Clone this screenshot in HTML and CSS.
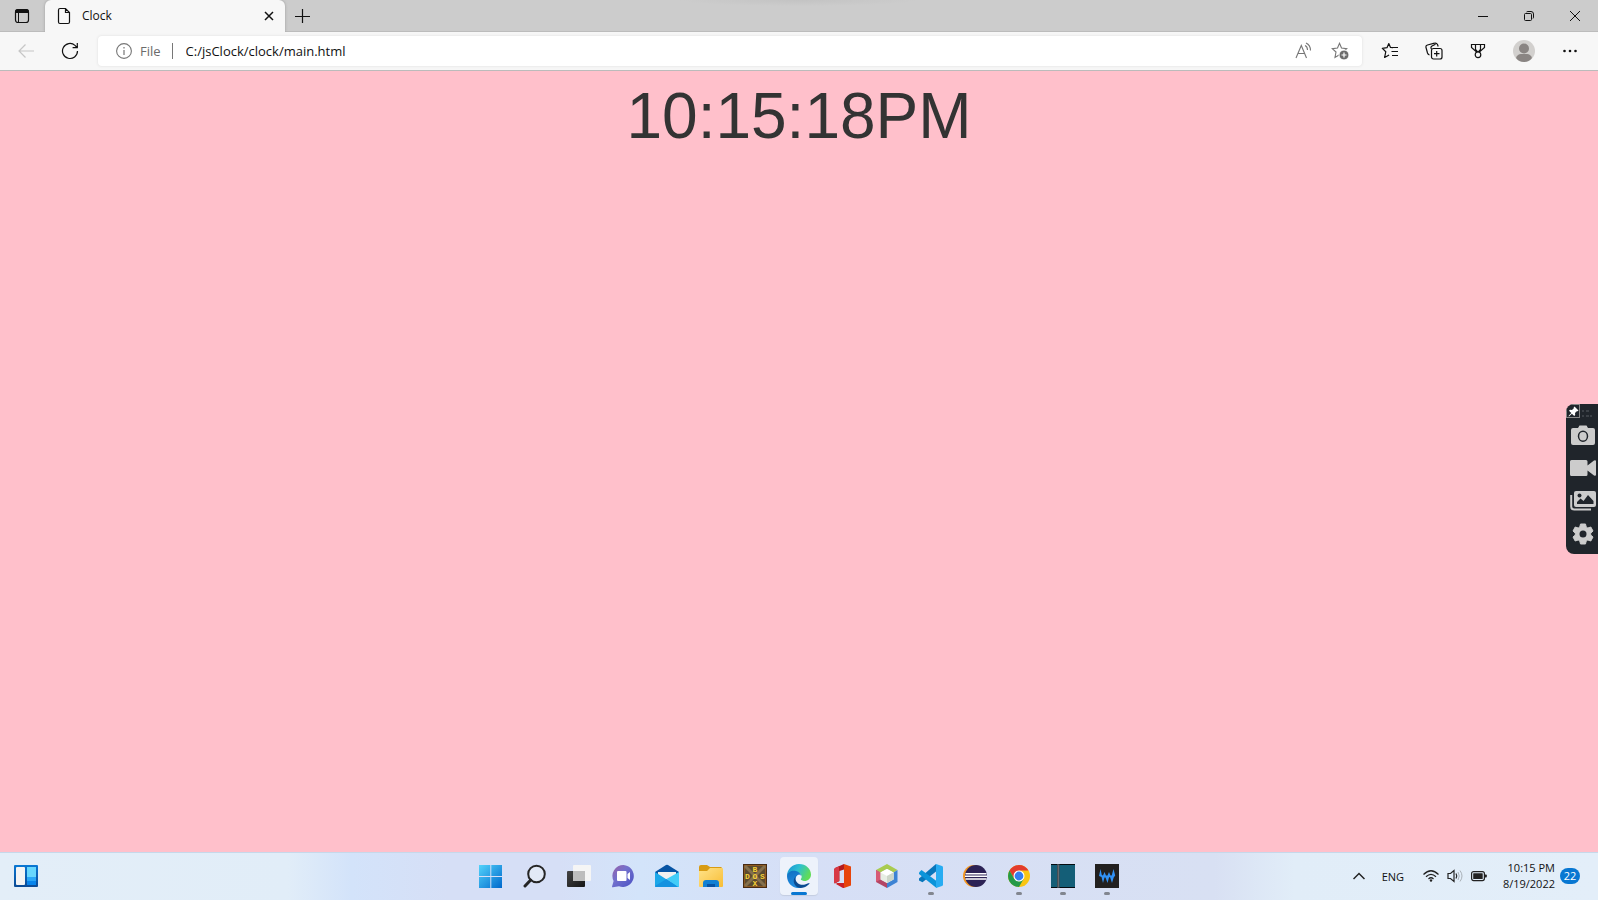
FILE: index.html
```html
<!DOCTYPE html>
<html lang="en">
<head>
<meta charset="utf-8">
<title>Clock</title>
<link rel="stylesheet" href="styles.css">
</head>
<body>
<header class="titlebar">
  <button class="tab-actions" aria-label="Tab actions menu"><svg width="16" height="16" viewBox="0 0 16 16"><rect x="1.5" y="1.5" width="13" height="13" rx="2.5" fill="none" stroke="#111" stroke-width="1.200"/><path d="M1 5V4q0-3 3-3h8q3 0 3 3v1z" fill="#111"/><path d="M4.500 5v9.500" stroke="#111"/></svg></button>
  <div class="tab">
    <svg width="14" height="18" viewBox="0 0 14 18" fill="none" stroke="#111" stroke-width="1.2"><path d="M3 1.500h5.500l4 4V15q0 1.500-1.500 1.500H3Q1.500 16.500 1.500 15V3Q1.500 1.500 3 1.500zM8.500 1.500v4h4"/></svg>
    <span class="tab-title">Clock</span>
    <button class="tab-close" aria-label="Close tab"><svg width="10" height="10" viewBox="0 0 10 10"><path d="M1 1l8 8M9 1l-8 8" stroke="#111" stroke-width="1.500"/></svg></button>
  </div>
  <button class="new-tab" aria-label="New tab"><svg width="16" height="16" viewBox="0 0 16 16"><path d="M8.500 1v14M1 8.500h15" stroke="#111" stroke-width="1.200"/></svg></button>
  <div class="window-controls">
    <button aria-label="Minimize"><svg width="10" height="10" viewBox="0 0 10 10"><path d="M0 5.500h10" stroke="#111"/></svg></button>
    <button aria-label="Restore"><svg width="10" height="10" viewBox="0 0 10 10" fill="none" stroke="#111"><rect x=".5" y="2.500" width="7" height="7" rx="1"/><path d="M2.500 1Q3 .500 4 .500h3Q9.500.5 9.500 3v3q0 1-.5 1.500"/></svg></button>
    <button aria-label="Close"><svg width="10" height="10" viewBox="0 0 10 10"><path d="M0 0l10 10M10 0L0 10" stroke="#111"/></svg></button>
  </div>
</header>
<nav class="toolbar">
  <button class="nav-button" aria-label="Back" disabled><svg width="16" height="16" viewBox="0 0 16 16" fill="none" stroke="#c6c6c6" stroke-width="1.200"><path d="M16 8H1M7.500 1.500L1 8l6.500 6.500"/></svg></button>
  <button class="nav-button" aria-label="Refresh"><svg width="18" height="18" viewBox="0 0 18 18" fill="none" stroke="#111" stroke-width="1.200"><path d="M16.500 9a7.500 7.500 0 1 1-2.500-5.600L16 5.500M16.300 1v4.700h-4.700"/></svg></button>
  <div class="address">
    <svg width="16" height="16" viewBox="0 0 16 16"><circle cx="8" cy="8" r="7.400" fill="none" stroke="#767676" stroke-width="1.100"/><path d="M8 7v5M8 4v1.400" stroke="#767676" stroke-width="1.200"/></svg>
    <label class="scheme" for="url">File</label>
    <input id="url" class="url" type="text" value="C:/jsClock/clock/main.html" spellcheck="false">
    <button class="address-button" aria-label="Read aloud"><svg width="18" height="18" viewBox="0 0 18 18" fill="none" stroke="#767676" stroke-width="1.100"><path d="M1 16L6.300 3.500 11.500 16M3 11.500h6.500M10 3.500q2.500 1 2.500 4.500M11 1q4.500 2 4.500 7.500"/></svg></button>
    <button class="address-button" aria-label="Add to favorites"><svg width="18" height="18" viewBox="0 0 18 18"><path d="M8.500 1.300l2 4.700 5.200.6-3.900 3.500 1 5.300-4.300-2.700-4.500 2.700L5 10 1.300 6.600 6.500 6z" fill="none" stroke="#767676" stroke-width="1.100"/><circle cx="13" cy="13" r="5" fill="#6b6b6b" stroke="#fff"/><path d="M13 10.500v5M10.500 13h5" stroke="#fff" stroke-width="1.200"/></svg></button>
  </div>
  <div class="tools">
    <button aria-label="Favorites"><svg width="18" height="18" viewBox="0 0 18 18" fill="none" stroke="#111" stroke-width="1.200" stroke-linejoin="round"><path d="M12 5.600l-2.500-.1L7.800 1.500 6 5.700l-4.700.6 3.500 3.400-1.200 5.800 4.500-2.600M11.500 5.500h5.500M10.500 9.500H17M11 13.500h6"/></svg></button>
    <button aria-label="Collections"><svg width="18" height="18" viewBox="0 0 18 18" fill="none" stroke="#111" stroke-width="1.200"><rect x="6.500" y="6.500" width="10.500" height="10.500" rx="2"/><path d="M11.700 9v5.500M9 11.700h5.500M4.500 13q-1.500-.4-2-2L1 5.500q-.5-2 1.500-2.500l7-1.800q2-.6 3 1.300l.7 2M6.500 7q-1.300-2 .5-3l3.500-1.800"/></svg></button>
    <button aria-label="Rewards"><svg width="18" height="18" viewBox="0 0 18 18" fill="none" stroke="#111" stroke-width="1.200"><path d="M2.500 2.500h13v3L10.500 10h-3l-5-4.500zM6.500 2.500v5l2.500 3 2.500-3v-5"/><circle cx="9" cy="12.800" r="2.800" fill="#f7f7f7"/></svg></button>
    <button class="wide" aria-label="Profile"><svg width="22" height="22" viewBox="0 0 22 22"><circle cx="11" cy="11" r="11" fill="#d2d0ce"/><circle cx="11" cy="8.500" r="5" fill="#8a8583"/><path d="M3 18q1.500-4 5-4h6q3.500 0 5 4-3 4-8 4t-8-4z" fill="#8a8583"/></svg></button>
    <button class="wide" aria-label="Settings and more"><svg width="16" height="16" viewBox="0 0 16 16" fill="#111"><circle cx="2.500" cy="8" r="1.300"/><circle cx="8" cy="8" r="1.300"/><circle cx="13.500" cy="8" r="1.300"/></svg></button>
  </div>
</nav>
<main class="page">
  <div class="clock">10:15:18PM</div>
  <aside class="capture">
    <div class="capture-head"><button class="pin" aria-label="Pin"><svg width="11" height="11" viewBox="0 0 11 11"><path d="M6.500.5l4 4-1 .8-.7-.1-1.800 1.800.2 2-1 1-2.300-2.300L1 10.500l-.5-.5 2.800-2.900L1 4.800l1-1 2 .2L5.800 2.200l-.1-.7z" fill="#fff"/></svg></button><svg width="11" height="14" viewBox="0 0 11 14"><path d="M0 6h2v2H0zm4 0h3v2H4zM0 11h2v2H0zm4 0h3v2H4zM8 11h2v2H8z" fill="#3b4046"/></svg></div>
    <button aria-label="Take screenshot"><svg width="24" height="20" viewBox="0 0 24 20"><path d="M2 3h5l1.500-2.500h7L17 3h5q2 0 2 2v13q0 2-2 2H2q-2 0-2-2V5q0-2 2-2z" fill="#ccc"/><ellipse cx="12" cy="11.300" rx="4.500" ry="5" fill="none" stroke="#20252b" stroke-width="1.500"/></svg></button>
    <button aria-label="Record video"><svg width="26" height="18" viewBox="0 0 26 18"><path d="M1.500 1H16q1.500 0 1.500 1.500v4L24 1.500q2-1 2 1v13q0 2-2 1l-6.500-5v4Q17.500 17 16 17H1.500Q0 17 0 15.500v-13Q0 1 1.500 1z" fill="#ccc"/></svg></button>
    <button aria-label="Gallery"><svg width="26" height="20" viewBox="0 0 26 20"><path d="M1.200 4v11.500q0 3 3 3H21" fill="none" stroke="#ccc" stroke-width="2"/><rect x="4" y="0" width="22" height="16" rx="2" fill="#ccc"/><path d="M7 13v-2l3.500-3.500 3 2.500L18 4l5.500 6v3z" fill="#20252b"/><circle cx="9.500" cy="4.500" r="2" fill="#20252b"/></svg></button>
    <button aria-label="Capture settings"><svg width="22" height="22" viewBox="0 0 22 22"><path d="M8.500 1h5l.7 3 1.600 1 3-1 2.200 4-2.300 2.200v1.800L21 14l-2.200 4-3-1-1.600 1-.7 3h-5l-.7-3-1.600-1-3 1L1 14l2.300-2v-1.800L1 8l2.200-4 3 1 1.600-1z" fill="#ccc" stroke="#ccc" stroke-linejoin="round"/><circle cx="11" cy="11" r="3.500" fill="#20252b"/></svg></button>
  </aside>
</main>
<footer class="taskbar">
  <div class="task-left"><button class="widgets" aria-label="Widgets"><svg width="24" height="22" viewBox="0 0 24 22"><defs><linearGradient id="wg" x2="0" y2="1"><stop stop-color="#0a78d4"/><stop offset="1" stop-color="#0c4a94"/></linearGradient></defs><rect width="24" height="22" rx="1" fill="url(#wg)"/><rect x="2" y="2" width="9" height="18" rx="1" fill="#f4f4f4"/><path d="M13 2h9v10h-9z" fill="#68d7fd"/><path d="M13 12h9v4h-9z" fill="#2aa7f7"/><path d="M13 16h9v4h-9z" fill="#0885ec"/></svg></button></div>
  <div class="apps">
    <button aria-label="Start"><svg width="24" height="24" viewBox="0 0 24 24"><defs><linearGradient id="win" x2="1" y2="1"><stop stop-color="#52d3fb"/><stop offset="1" stop-color="#0068cc"/></linearGradient></defs><path d="M0 1h11.300v11H0zM12.300 1H23v11H12.300zM0 13h11.300v11H0zM12.300 13H23v11H12.300z" fill="url(#win)"/></svg></button>
    <button aria-label="Search"><svg width="24" height="24" viewBox="0 0 24 24" fill="none" stroke="#252525"><circle cx="13.500" cy="10" r="8.300" fill="#e2e9f6" stroke-width="2"/><path d="M7.700 16L2 22" stroke-width="3" stroke-linecap="round"/></svg></button>
    <button aria-label="Task view"><svg width="24" height="24" viewBox="0 0 24 24"><defs><linearGradient id="tv" x2="1" y2="1"><stop stop-color="#444"/><stop offset="1" stop-color="#151515"/></linearGradient></defs><rect y="7" width="18" height="16" rx="1" fill="url(#tv)"/><rect x="6" y="1" width="18" height="16" rx="1" fill="#f5f5f5"/><path d="M6 7h12v10H7q-1 0-1-1z" fill="#bdbdbd"/></svg></button>
    <button aria-label="Chat"><svg width="24" height="24" viewBox="0 0 24 24"><defs><linearGradient id="ch" x2="1" y2="1"><stop stop-color="#9b5fa5"/><stop offset=".4" stop-color="#7371cd"/><stop offset="1" stop-color="#4951c4"/></linearGradient></defs><path d="M12.500 1a11 11 0 1 1-4.500 21.300L1.800 23.300q-1 0-.7-1l1.500-5.300A11 11 0 0 1 12.500 1z" fill="url(#ch)"/><rect x="6" y="7" width="9.500" height="10" rx="1" fill="#fff"/><path d="M16.500 10l2.500-2v8l-2.500-2z" fill="#fff"/></svg></button>
    <button aria-label="Mail"><svg width="24" height="24" viewBox="0 0 24 24"><path d="M0 8L11 1q1-.6 2 0l11 7-2 8H2z" fill="#0754a4"/><path d="M3 8h18v8H3z" fill="#f0f0f0"/><path d="M0 8l14 9 10 5q0 1-1 1H1q-1 0-1-1z" fill="#1ba7e9"/><path d="M24 8v14q0 1-1 1L11.500 15z" fill="#42cdf8"/><path d="M0 22l11.500-7L23 23H1q-1 0-1-1z" fill="#1492e0"/></svg></button>
    <button aria-label="File Explorer"><svg width="24" height="24" viewBox="0 0 24 24"><defs><linearGradient id="fe" x2="1" y2="1"><stop stop-color="#ffe38a"/><stop offset="1" stop-color="#f8bd35"/></linearGradient></defs><path d="M0 3q0-2 2-2h6l3 2h11q1 0 1 2v8H0z" fill="#d89b13"/><path d="M0 7h8l3-3h12q1 0 1 1v17q0 1-1 1H1q-1 0-1-1z" fill="url(#fe)"/><path d="M4 23v-4q0-3 3-3h10q3 0 3 3v4z" fill="#1180d3"/><path d="M8 20h8v3H8z" fill="#0754a4"/></svg></button>
    <button aria-label="DOSBox"><svg width="24" height="24" viewBox="0 0 24 24"><rect width="24" height="24" fill="#462a13"/><rect x="1.500" y="1.500" width="21" height="21" fill="#5b4a30" stroke="#8d5921"/><path d="M2 2l20 20M22 2L2 22" stroke="#85704c" stroke-width="3"/><g class="dos"><text x="12" y="7.500">B</text><text x="4.500" y="14.500">D</text><text x="12" y="14.500">O</text><text x="19.500" y="14.500">S</text><text x="12" y="21.500">X</text></g></svg></button>
    <button class="active" aria-label="Microsoft Edge"><svg width="24" height="24" viewBox="0 0 24 24"><defs><linearGradient id="ed" x1="0" y1="0" x2="1" y2=".4"><stop stop-color="#168fd5"/><stop offset=".5" stop-color="#2dbfd1"/><stop offset="1" stop-color="#60dc58"/></linearGradient><linearGradient id="eb" x2=".3" y2="1"><stop stop-color="#0f6fc2"/><stop offset="1" stop-color="#218cdf"/></linearGradient></defs><path d="M0 12C0 5 5.500 0 12 0c7 0 12 5 12 10.500 0 4-3 6.500-6.500 6.500-3 0-4-1.200-3.800-2 1.800-1 1.300-6-3.700-6.500C5 8 1 9 0 12z" fill="url(#ed)"/><path d="M0 12c.5-4 5-6 9-5 3 .7 5 3 5.200 5-4-2.500-7 1.500-5.500 5.500 1 3.500 4 5.500 6.300 6C8 26 0 20.500 0 12z" fill="url(#eb)"/><path d="M9 12c-2.500 6 4 10 9 8.500 2-.5 3.800-1.700 4.500-1.500.5.300-3 5-9 5C7 23.500 4.500 16 9 12z" fill="#0b4b91"/><path d="M10 12q2-3 4.200 0 .2 1.800-.8 3 .5 2 4.600 2-3 2-6 0-2.500-2-2-5z" fill="#eef4fc"/></svg></button>
    <button aria-label="Office"><svg width="24" height="24" viewBox="0 0 24 24"><path d="M13 0l7 2.500v19L13 24z" fill="#e7440b"/><path d="M13 0v5.500L8.500 7v10L4 19.500Q3 19 3 17V6q0-1.500 1.500-2.300z" fill="#b41a1c"/><path d="M3 6q0-1.500 1.500-2.300L8 2.200V17l-4.500 2.400Q3 19 3 17z" fill="#d83945"/><path d="M6 19h7v5q-1 0-2-.6L5 20z" fill="#c91e28"/></svg></button>
    <button aria-label="NetBeans"><svg width="24" height="24" viewBox="0 0 24 24"><path d="M12 0l10.500 6-4 2.500L12 5 5.500 8.500 1 6z" fill="#a9cb50"/><path d="M1 6l4.500 2.500v7L12 19v5L1 18z" fill="#b34665"/><path d="M1 6l4.500 2.500v7L1 18z" fill="#d65a75"/><path d="M22.500 6v12L12 24v-5l6.500-3.500v-7z" fill="#3d83d4"/><path d="M12 5l6.500 3.500v7L12 19l-6.500-3.500v-7z" fill="#e7eee4"/><path d="M5.500 8.500L12 12l6.500-3.500L12 5z" fill="#fff"/><path d="M12 12v7l6.500-3.500v-7z" fill="#cdd6c8"/></svg></button>
    <button class="running" aria-label="Visual Studio Code"><svg width="24" height="24" viewBox="0 0 24 24"><path d="M17 0v7.500L3.500 18.200 0 16.500v-2z" fill="#0876bb"/><path d="M0 8.500L2.500 6l15 11v7L0 10z" fill="#0b94da"/><path d="M17 0l6 2q1 .4 1 1.500v17q0 1-1 1.500l-6 2z" fill="#27acf2"/></svg></button>
    <button aria-label="Eclipse"><svg width="24" height="24" viewBox="0 0 24 24"><circle cx="11" cy="12" r="11" fill="#f39620"/><circle cx="13" cy="12" r="11" fill="#2c2255"/><path d="M2.500 9h21v1.500h-21zM2 11.500h22V13H2zM2.500 14.200h21v1.500h-21z" fill="#fff"/></svg></button>
    <button class="running" aria-label="Google Chrome"><svg width="24" height="24" viewBox="0 0 24 24"><circle cx="12" cy="12" r="11" fill="#f9c513"/><path d="M2.500 6.500A11 11 0 0 1 21.500 6.500H12L7.200 14.700z" fill="#e33b2e"/><path d="M2.500 6.500l4.700 8.200 4.800 2.800 4.700-2.800L12 23A11 11 0 0 1 2.500 6.500z" fill="#249a48"/><circle cx="12" cy="12" r="5.500" fill="#fff"/><circle cx="12" cy="12" r="4.400" fill="#347ef0"/></svg></button>
    <button class="running" aria-label="Notebook"><svg width="24" height="24" viewBox="0 0 24 24"><rect width="24" height="24" fill="#145e77"/><path d="M0 0h24v1H0zM0 23h24v1H0z" fill="#050b10"/><path d="M6 0h2.500v24H6z" fill="#3a444c"/><path d="M7.300 1v22" stroke="#7c8186" stroke-width=".8"/></svg></button>
    <button class="running" aria-label="Wave recorder"><svg width="24" height="24" viewBox="0 0 24 24"><rect width="24" height="24" fill="#22201f"/><path d="M5.500 5l1.300 6 1.200.5L9.500 8l1.500 3.500h1.500L14 8l1.500 3.500h1.200L18.500 5l1.700 6.500-1.500 2L17 19l-2-6-1 .5-1.500 5.500-2-5.500h-1L8 19l-1.500-6L4 12z" fill="#3191f5"/></svg></button>
  </div>
  <div class="tray">
    <button class="overflow" aria-label="Show hidden icons"><svg width="12" height="8" viewBox="0 0 12 8"><path d="M.5 7L6 1.500 11.500 7" fill="none" stroke="#222" stroke-width="1.500"/></svg></button>
    <button class="language">ENG</button>
    <button class="status" aria-label="Network, volume and battery">
      <svg width="16" height="12" viewBox="0 0 16 12" fill="none" stroke="#222" stroke-width="1.200"><path d="M.5 4.500Q8-3 15.500 4.500M3 6.700Q8 2 13 6.700M5.500 9Q8 6.500 10.500 9"/><circle cx="8" cy="10.500" r="1.200" fill="#222" stroke="none"/></svg>
      <svg width="16" height="14" viewBox="0 0 16 14" fill="none" stroke="#222" stroke-width="1.200"><path d="M1 4.500h2.500L7 1.500v11L3.500 9.500H1zM9 4.500q1.500 2.500 0 5"/><path d="M11 3q2.500 4 0 8M13 1.500q4 5.500 0 11" stroke="#aab1b8" stroke-width="1"/></svg>
      <svg width="16" height="12" viewBox="0 0 16 12"><rect x=".6" y="1.600" width="12.800" height="9" rx="2" fill="none" stroke="#222" stroke-width="1.200"/><rect x="2.200" y="3.200" width="9.500" height="5.800" rx=".5" fill="#222"/><path d="M14 4.500h1q.8 0 .8.800v1.500q0 .8-.8.800h-1z" fill="#222"/></svg>
    </button>
    <button class="datetime"><span>10:15 PM</span><span>8/19/2022</span></button>
    <span class="badge">22</span>
  </div>
</footer>
</body>
</html>
```

FILE: styles.css
```css
* { box-sizing: border-box; }
body {
  margin: 0;
  height: 100vh;
  display: flex;
  flex-direction: column;
  overflow: hidden;
  font-family: "Open Sans", "Noto Sans", sans-serif;
  font-size: 12px;
  color: #111;
}
button {
  display: flex;
  align-items: center;
  justify-content: center;
  flex: none;
  margin: 0;
  padding: 0;
  border: 0;
  background: none;
  color: inherit;
  font: inherit;
}
svg { display: block; flex: none; }

.titlebar {
  display: flex;
  height: 32px;
  flex: none;
  background: radial-gradient(ellipse 120px 6px at 50% 0, #c3c3c3, #ccc);
  box-shadow: inset 0 -1px #bcbcbc;
}
.tab-actions { width: 44px; }
.tab {
  display: flex;
  align-items: center;
  width: 240px;
  margin-left: 1px;
  padding: 0 11px 0 12px;
  border-radius: 6px 6px 0 0;
  background: #f7f7f7;
  box-shadow: 0 0 3px #999;
  clip-path: inset(0 -3px);
}
.tab-title { flex: 1; margin-left: 11px; line-height: 16px; }
.new-tab { width: 34px; }
.window-controls { display: flex; margin-left: auto; }
.window-controls button { width: 46px; }

.toolbar {
  display: flex;
  align-items: center;
  height: 39px;
  flex: none;
  padding: 0 5px 1px 4px;
  background: #f7f7f7;
  border-bottom: 1px solid #bbb;
}
.nav-button { width: 44px; height: 32px; }
.address {
  display: flex;
  align-items: center;
  flex: 1;
  height: 30px;
  margin: 0 6px;
  padding: 0 12px 0 18px;
  border-radius: 4px;
  background: #fff;
  box-shadow: 0 0 3px #ddd;
}
.scheme {
  margin-left: 8px;
  padding-right: 11px;
  border-right: 1px solid #777;
  color: #6b6b6b;
  font-size: 13px;
  line-height: 16px;
}
.url {
  flex: 1;
  min-width: 0;
  margin: 0 0 0 13px;
  padding: 0;
  border: 0;
  outline: 0;
  background: none;
  color: #111;
  font: 13px "Open Sans", "Noto Sans", sans-serif;
}
.address-button { width: 36px; height: 28px; }
.address-button:last-child { width: 20px; margin-left: 8px; }
.tools { display: flex; }
.tools button { width: 44px; height: 32px; }
.tools .wide { width: 46px; }
.tools button:nth-child(3) { margin-right: 1px; }

.page { position: relative; flex: 1; background: #ffc0cb; }
.clock {
  padding-top: 8px;
  color: #333;
  font: 64px "Liberation Sans", Arial, sans-serif;
  text-align: center;
}
.capture {
  position: absolute;
  top: 333px;
  right: 0;
  width: 32px;
  padding-bottom: 4px;
  overflow: hidden;
  border-radius: 8px 0 0 8px;
  background: #20252b;
}
.capture-head { display: flex; height: 14px; }
.capture button { width: 32px; height: 33px; padding-left: 1px; }
.capture .pin { width: 14px; height: 14px; padding: 0; border: 1px solid #888; margin-right: 2px; }

.taskbar {
  display: grid;
  grid-template-columns: 1fr auto 1fr;
  height: 48px;
  flex: none;
  padding-bottom: 1px;
  border-top: 1px solid #c6d8ea;
  background: linear-gradient(90deg, #e3eef8 0, #e1edf8 18%, #d3e3fa 22%, #d6dff6 28%, #d6dff6 35%, #d3e4fa 40%, #d6dff6 50%, #d8e0f3 76%, #e1edf8 81%, #e3eef9 100%);
}
.task-left { display: flex; align-items: center; padding-left: 14px; }
.apps { display: flex; align-items: center; }
.apps button { position: relative; width: 44px; height: 46px; }
.apps .active::before {
  content: "";
  position: absolute;
  inset: 4px 3px;
  border-radius: 4px;
  background: #edf2fb;
  box-shadow: 0 1px 1px #c4cde0;
}
.apps svg { position: relative; }
.active::after, .running::after {
  content: "";
  position: absolute;
  bottom: 4px;
  width: 6px;
  height: 3px;
  border-radius: 2px;
  background: #82868f;
}
.active::after { width: 16px; background: #0877d2; }
.dos {
  fill: #f5cf35;
  font: bold 8px "Liberation Mono", monospace;
  text-anchor: middle;
}
.tray {
  display: flex;
  align-items: center;
  justify-content: flex-end;
  padding-right: 18px;
  font-size: 11px;
}
.overflow { width: 32px; height: 40px; }
.language { width: 36px; height: 40px; }
.status { gap: 8px; height: 40px; padding: 0 16px 0 12px; }
.datetime { flex-direction: column; align-items: flex-end; line-height: 16px; margin-right: 5px; }
.badge {
  min-width: 20px;
  height: 16px;
  border-radius: 8px;
  background: #0877d2;
  color: #fff;
  line-height: 16px;
  text-align: center;
}
```
